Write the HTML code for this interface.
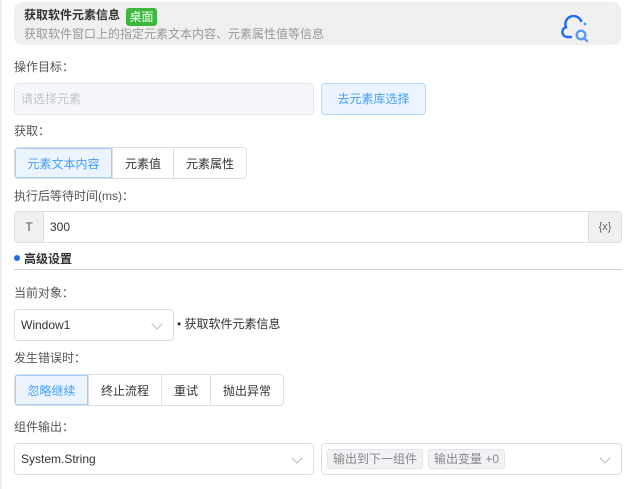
<!DOCTYPE html>
<html><head><meta charset="utf-8"><style>
*{box-sizing:border-box;margin:0;padding:0}
body{width:630px;height:489px;background:#fff;font-family:"Liberation Sans","Noto Sans CJK SC",sans-serif;font-size:12px;color:#333;position:relative;overflow:hidden}
.a{position:absolute}
.edge{left:0;top:0;width:2px;height:489px;background:#ececec}
.hd{left:14px;top:2px;width:607px;height:43px;background:#f0f0f0;border-radius:8px}
.lbl{left:14px;color:#555;font-size:12px;line-height:14px}
.box{border:1px solid #dcdfe6;border-radius:4px;background:#fff}
.seg{display:flex;border:1px solid #dcdfe6;border-radius:4px;overflow:hidden}
.seg div{display:flex;align-items:center;justify-content:center;border-left:1px solid #dcdfe6;color:#333;font-size:12px}
.seg div:first-child{border-left:none;background:#ecf5ff;color:#409eff;box-shadow:inset 0 0 0 1px #a0cfff}
.arr{position:absolute;right:12px;top:10px;width:8px;height:8px;border-right:1px solid #bbb;border-bottom:1px solid #bbb;transform:rotate(45deg)}
.tag{position:absolute;top:5px;height:20px;background:#f0f2f5;border:1px solid #e4e4e4;border-radius:3px;color:#888;font-size:12px;line-height:18px;padding:0 5px}
</style></head><body>
<div class="a edge"></div>
<div class="a hd">
 <div class="a" style="left:10px;top:5px;font-weight:bold;font-size:12px;color:#333;line-height:16px">获取软件元素信息</div>
 <div class="a" style="left:112px;top:6px;height:18px;width:31px;background:#3cb83c;color:#fff;border-radius:3px;font-size:12px;line-height:18px;text-align:center">桌面</div>
 <div class="a" style="left:10px;top:25px;color:#999;font-size:12px;line-height:14px">获取软件窗口上的指定元素文本内容、元素属性值等信息</div>
 <svg class="a" style="left:547px;top:13px" width="34" height="28" viewBox="0 0 34 28">
  <path d="M10 22H6a5 5 0 0 1-1-9.8A8 8 0 0 1 20 6" fill="none" stroke="#1a6cf0" stroke-width="2.4" stroke-linecap="round"/>
  <circle cx="24" cy="9" r="1.4" fill="#4a8ff5"/>
  <circle cx="20" cy="20" r="4.3" fill="none" stroke="#5a9cf5" stroke-width="2.4"/>
  <path d="M23 23l3 3" stroke="#5a9cf5" stroke-width="2.4" stroke-linecap="round"/>
 </svg>
</div>
<div class="a lbl" style="top:60px">操作目标：</div>
<div class="a box" style="left:14px;top:83px;width:300px;height:32px;background:#f5f7fa;border-color:#e4e7ed;color:#c0c4cc;padding-left:6px;line-height:30px">请选择元素</div>
<div class="a" style="left:321px;top:83px;width:105px;height:32px;background:#ecf5ff;border:1px solid #b3d8ff;border-radius:4px;color:#409eff;text-align:center;line-height:30px">去元素库选择</div>
<div class="a lbl" style="top:124px">获取：</div>
<div class="a seg" style="left:14px;top:147px;height:32px">
 <div style="width:97px">元素文本内容</div><div style="width:61px">元素值</div><div style="width:73px">元素属性</div>
</div>
<div class="a lbl" style="top:189px">执行后等待时间(ms)：</div>
<div class="a box" style="left:14px;top:211px;width:608px;height:32px;overflow:hidden">
 <div class="a" style="left:0;top:0;width:29px;height:30px;background:#f0f0f0;border-right:1px solid #dcdfe6;text-align:center;line-height:30px;color:#555">T</div>
 <div class="a" style="left:35px;top:0;line-height:30px">300</div>
 <div class="a" style="right:0;top:0;width:33px;height:30px;background:#f0f0f0;border-left:1px solid #dcdfe6;text-align:center;line-height:30px;color:#666;font-size:11px">{x}</div>
</div>
<div class="a" style="left:14px;top:255px;width:6px;height:6px;border-radius:50%;background:#1a6cf0"></div>
<div class="a" style="left:24px;top:251px;font-weight:bold;font-size:12px;line-height:16px">高级设置</div>
<div class="a" style="left:14px;top:269px;width:608px;height:1px;background:#d0d0d0"></div>
<div class="a lbl" style="top:286px">当前对象：</div>
<div class="a box" style="left:14px;top:309px;width:160px;height:32px;padding-left:6px;line-height:30px">Window1<span class="arr"></span></div>
<div class="a" style="left:177px;top:316px;font-size:12px;line-height:16px">• 获取软件元素信息</div>
<div class="a lbl" style="top:351px">发生错误时：</div>
<div class="a seg" style="left:14px;top:374px;height:32px">
 <div style="width:73px">忽略继续</div><div style="width:73px">终止流程</div><div style="width:49px">重试</div><div style="width:73px">抛出异常</div>
</div>
<div class="a lbl" style="top:420px">组件输出：</div>
<div class="a box" style="left:14px;top:443px;width:300px;height:32px;padding-left:6px;line-height:30px">System.String<span class="arr"></span></div>
<div class="a box" style="left:321px;top:443px;width:301px;height:32px">
 <span class="tag" style="left:5px">输出到下一组件</span>
 <span class="tag" style="left:106px">输出变量 +0</span>
 <span class="arr"></span>
</div>
</body></html>
